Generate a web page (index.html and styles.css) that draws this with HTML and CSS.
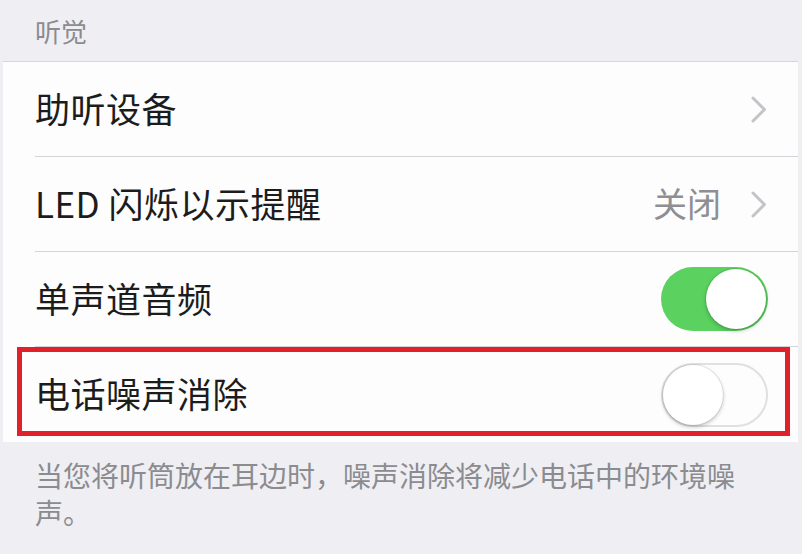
FILE: index.html
```html
<!DOCTYPE html>
<html lang="zh-CN">
<head>
<meta charset="utf-8">
<title>听觉</title>
<link rel="stylesheet" href="styles.css">
</head>
<body>
<div class="page">
  <div class="section-header">听觉</div>
  <div class="group">
    <div class="row">
      <span class="label">助听设备</span>
      <span class="accessory">
        <svg class="chev" width="16" height="27" viewBox="0 0 16 27"><polyline points="2,2 13.5,13.5 2,25" fill="none" stroke="#c3c3c8" stroke-width="3" stroke-linecap="round" stroke-linejoin="round"/></svg>
      </span>
    </div>
    <div class="row">
      <span class="label">LED 闪烁以示提醒</span>
      <span class="accessory">
        <span class="value">关闭</span>
        <svg class="chev" width="16" height="27" viewBox="0 0 16 27"><polyline points="2,2 13.5,13.5 2,25" fill="none" stroke="#c3c3c8" stroke-width="3" stroke-linecap="round" stroke-linejoin="round"/></svg>
      </span>
    </div>
    <div class="row">
      <span class="label">单声道音频</span>
      <span class="toggle on"><span class="knob"></span></span>
    </div>
    <div class="row last highlighted">
      <span class="label">电话噪声消除</span>
      <span class="toggle off"><span class="knob"></span></span>
      <span class="mark"></span>
    </div>
  </div>
  <div class="footer">当您将听筒放在耳边时，噪声消除将减少电话中的环境噪声。</div>
</div>
</body>
</html>
```
FILE: styles.css
```css
html, body {
  margin: 0;
  padding: 0;
  background: #efeff3;
}
.page {
  width: 802px;
  height: 554px;
  overflow: hidden;
  font-family: "Noto Sans CJK SC", "Noto Sans", sans-serif;
  background: #efeff3;
}
.section-header {
  height: 61px;
  margin: 0 4px 0 3px;
  padding-left: 32px;
  display: flex;
  align-items: center;
  font-size: 26px;
  color: #8b8b90;
  border-bottom: 1px solid #d6d6da;
}
.group {
  margin: 0 4px 0 3px;
  background: #fdfdfd;
}
.row {
  height: 95px;
  margin-left: 32px;
  padding-right: 30px;
  display: flex;
  align-items: center;
  justify-content: space-between;
  border-bottom: 1px solid #d4d4d8;
  box-sizing: border-box;
}
.row.last {
  border-bottom: none;
  position: relative;
}
.label {
  font-size: 35px;
  color: #1c1c1c;
  letter-spacing: 0.5px;
  padding-bottom: 4px;
}
.accessory {
  display: flex;
  align-items: center;
  gap: 30px;
}
.value {
  font-size: 34px;
  color: #8e8e93;
  padding-bottom: 4px;
}
.chev {
  display: block;
  margin-right: 1px;
}
.toggle {
  position: relative;
  width: 107px;
  height: 64px;
  border-radius: 32px;
  box-sizing: border-box;
  display: block;
}
.toggle.on {
  background: #5bd15f;
}
.toggle.off {
  background: #fdfdfd;
  border: 2px solid #e0e0e4;
}
.knob {
  position: absolute;
  width: 60px;
  height: 60px;
  border-radius: 50%;
  background: #fff;
  box-shadow: 0 2px 4px rgba(0,0,0,0.22), 0 0 0 1px rgba(0,0,0,0.08);
}
.toggle.on .knob {
  top: 2px;
  right: 2px;
}
.toggle.off .knob {
  top: 0;
  left: 0;
}
.mark {
  position: absolute;
  left: -18px;
  top: 0;
  width: 773px;
  height: 89px;
  border: 5px solid #e0202b;
  box-sizing: border-box;
  pointer-events: none;
}
.footer {
  margin: 0 4px 0 3px;
  padding: 15px 40px 0 32px;
  font-size: 28px;
  line-height: 37px;
  color: #8b8b90;
}
```
